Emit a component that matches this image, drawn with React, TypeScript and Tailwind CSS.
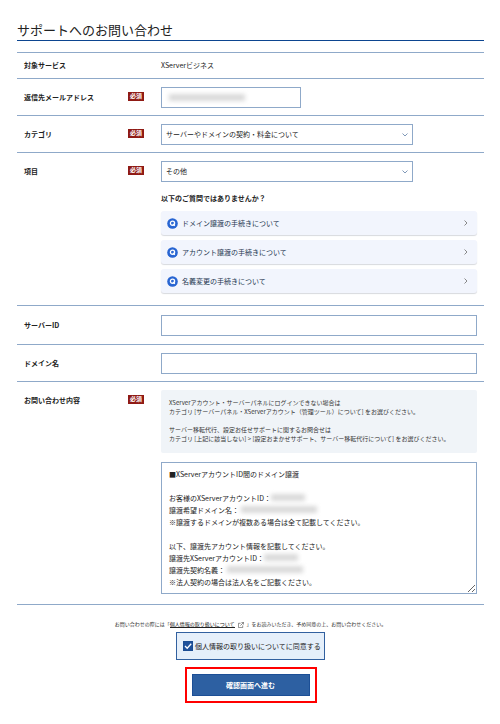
import type { ReactNode } from 'react'

interface RowProps {
  label: string
  htmlFor?: string
  required?: boolean
  className?: string
  children: ReactNode
}

const faqLinks = [
  'ドメイン譲渡の手続きについて',
  'アカウント譲渡の手続きについて',
  '名義変更の手続きについて',
]

const inquiryText = `■XServerアカウントID間のドメイン譲渡

お客様のXServerアカウントID：
譲渡希望ドメイン名：
※譲渡するドメインが複数ある場合は全て記載してください。

以下、譲渡先アカウント情報を記載してください。
譲渡先XServerアカウントID：
譲渡先契約名義：
※法人契約の場合は法人名をご記載ください。`

function Row({ label, htmlFor, required, className = 'pt-2 pb-[7px]', children }: RowProps) {
  return (
    <div className={`flex border-t border-[#8fa9c9] pr-[7px] pl-[7px] ${className}`}>
      <div className="flex h-[19px] w-[137px] shrink-0 items-center font-bold">
        <label htmlFor={htmlFor} className="w-[104px]">{label}</label>
        {required && (
          <span className="h-[9px] bg-[#8f1a14] px-[2px] text-[6px] leading-[8px] text-white">必須</span>
        )}
      </div>
      <div className="min-w-0 flex-1">{children}</div>
    </div>
  )
}

function SelectBox({ id, value }: { id: string; value: string }) {
  return (
    <div className="relative w-[252px] max-w-full">
      <select id={id} className="block h-[21px] w-full appearance-none border border-[#8fa9c9] bg-white px-1 pb-[2px]">
        <option>{value}</option>
      </select>
      <svg viewBox="0 0 6 4" className="pointer-events-none absolute top-[9px] right-[5px] h-1 w-[6px]" fill="none" stroke="#8099b8">
        <path d="M.5 .5 3 3 5.5 .5" />
      </svg>
    </div>
  )
}

// hides private values
function Mask({ className }: { className: string }) {
  return <span className={`pointer-events-none absolute h-[7px] bg-[#dadada] blur-[2px] ${className}`} />
}

export default function App() {
  return (
    <main className="bg-white pt-5 pr-4 pb-5 pl-[17px] font-['Noto_Sans_CJK_JP',sans-serif] text-[7px] leading-[12px] text-[#222]">
      <h1 className="mb-[11px] border-b border-[#0c4590] text-[13px] leading-[20px]">サポートへのお問い合わせ</h1>

      <form onSubmit={(e) => e.preventDefault()}>
        <Row label="対象サービス" className="py-[2px]">
          <p className="leading-[21px]">XServerビジネス</p>
        </Row>

        <Row label="返信先メールアドレス" htmlFor="email" required>
          <div className="relative w-[140px] max-w-full">
            <input id="email" type="email" className="block h-[21px] w-full border border-[#8fa9c9] px-1" />
            <Mask className="top-[7px] left-[8px] w-[76px]" />
          </div>
        </Row>

        <Row label="カテゴリ" htmlFor="category" required>
          <SelectBox id="category" value="サーバーやドメインの契約・料金について" />
        </Row>

        <Row label="項目" htmlFor="item" required className="pt-2 pb-3">
          <SelectBox id="item" value="その他" />
          <h2 className="mt-[10px] mb-[7px] font-bold">以下のご質問ではありませんか？</h2>
          <ul className="space-y-[5px]">
            {faqLinks.map((title) => (
              <li key={title}>
                <a href="#" className="flex h-6 items-center rounded-[3px] bg-[#f2f5fd] pr-[9px] pl-[6px] text-[#24354f] shadow-[0_1px_1px_#d8dade]">
                  <svg viewBox="0 0 11 11" className="mr-[4px] h-[11px] w-[11px]" fill="none">
                    <circle cx="5.5" cy="5.5" r="5.3" fill="#2865d2" />
                    <circle cx="5.5" cy="5.3" r="2.1" stroke="#fff" strokeWidth="1.3" />
                    <path d="m5.8 5.8 2 2" stroke="#fff" strokeWidth="1.2" />
                  </svg>
                  <span className="flex-1">{title}</span>
                  <svg viewBox="0 0 4 6" className="h-[6px] w-1" fill="none" stroke="#888">
                    <path d="M.5 .5 3 3 .5 5.5" />
                  </svg>
                </a>
              </li>
            ))}
          </ul>
        </Row>

        <Row label="サーバーID" htmlFor="server" className="pt-[9px] pb-2">
          <input id="server" type="text" className="block h-[21px] w-full border border-[#8fa9c9] px-1" />
        </Row>

        <Row label="ドメイン名" htmlFor="domain">
          <input id="domain" type="text" className="block h-[21px] w-full border border-[#8fa9c9] px-1" />
        </Row>

        <Row label="お問い合わせ内容" htmlFor="inquiry" required className="pt-2 pb-[10px]">
          <div className="mb-[9px] space-y-[9px] rounded-[2px] bg-[#f0f4f8] px-2 pt-2 pb-[10px] text-[6px] leading-[9px] text-[#333]">
            <p>
              XServerアカウント・サーバーパネルにログインできない場合は<br />
              カテゴリ [サーバーパネル・XServerアカウント（管理ツール）について] をお選びください。
            </p>
            <p>
              サーバー移転代行、設定お任せサポートに関するお問合せは<br />
              カテゴリ [上記に該当しない] &gt; [設定おまかせサポート、サーバー移転代行について] をお選びください。
            </p>
          </div>
          <div className="relative">
            <textarea
              id="inquiry"
              defaultValue={inquiryText}
              className="block h-[132px] w-full resize border border-[#8fa9c9] px-[7px] py-[5px] leading-[12px]"
            />
            <Mask className="top-[32px] left-[110px] w-[34px]" />
            <Mask className="top-[44px] left-[80px] w-[76px]" />
            <Mask className="top-[92px] left-[103px] w-[34px]" />
            <Mask className="top-[104px] left-[66px] w-[76px]" />
          </div>
        </Row>

        <div className="flex flex-col items-center border-t border-[#8fa9c9] pt-[14px]">
          <p className="text-[5px] leading-[9px] text-[#333]">
            お問い合わせの際には「
            <a href="#" className="border-b border-[#222] text-[#111]">個人情報の取り扱いについて</a>
            <svg viewBox="0 0 7 7" className="mx-[3px] inline h-[6px] w-[6px] align-middle" fill="none" stroke="#444" strokeWidth=".7">
              <path d="M3 1.5H.5v5h5V4M4 .5h2.5V3M6.3.7 2.8 4.2" />
            </svg>
            」をお読みいただき、予め同意の上、お問い合わせください。
          </p>

          <label className="mt-[4px] flex h-[28px] w-[149px] items-center gap-[2px] border border-[#31609f] bg-[#e5effa] pl-[6px]">
            <span className="relative flex">
              <input type="checkbox" defaultChecked className="peer h-[10px] w-[10px] appearance-none border border-[#1c4d93] bg-white checked:bg-[#1f519b]" />
              <svg viewBox="0 0 10 10" className="pointer-events-none absolute inset-0 hidden peer-checked:block" fill="none" stroke="#fff" strokeWidth="1.3">
                <path d="m2 5 2.2 2.3L8.2 2.8" />
              </svg>
            </span>
            個人情報の取り扱いについてに同意する
          </label>

          <div className="mt-[7px] border-2 border-[#ff0000] p-[5px]">
            <button type="submit" className="block h-[22px] w-[118px] border border-[#1c4f96] bg-[#2d60a2] font-bold text-white">
              確認画面へ進む
            </button>
          </div>
        </div>
      </form>
    </main>
  )
}
